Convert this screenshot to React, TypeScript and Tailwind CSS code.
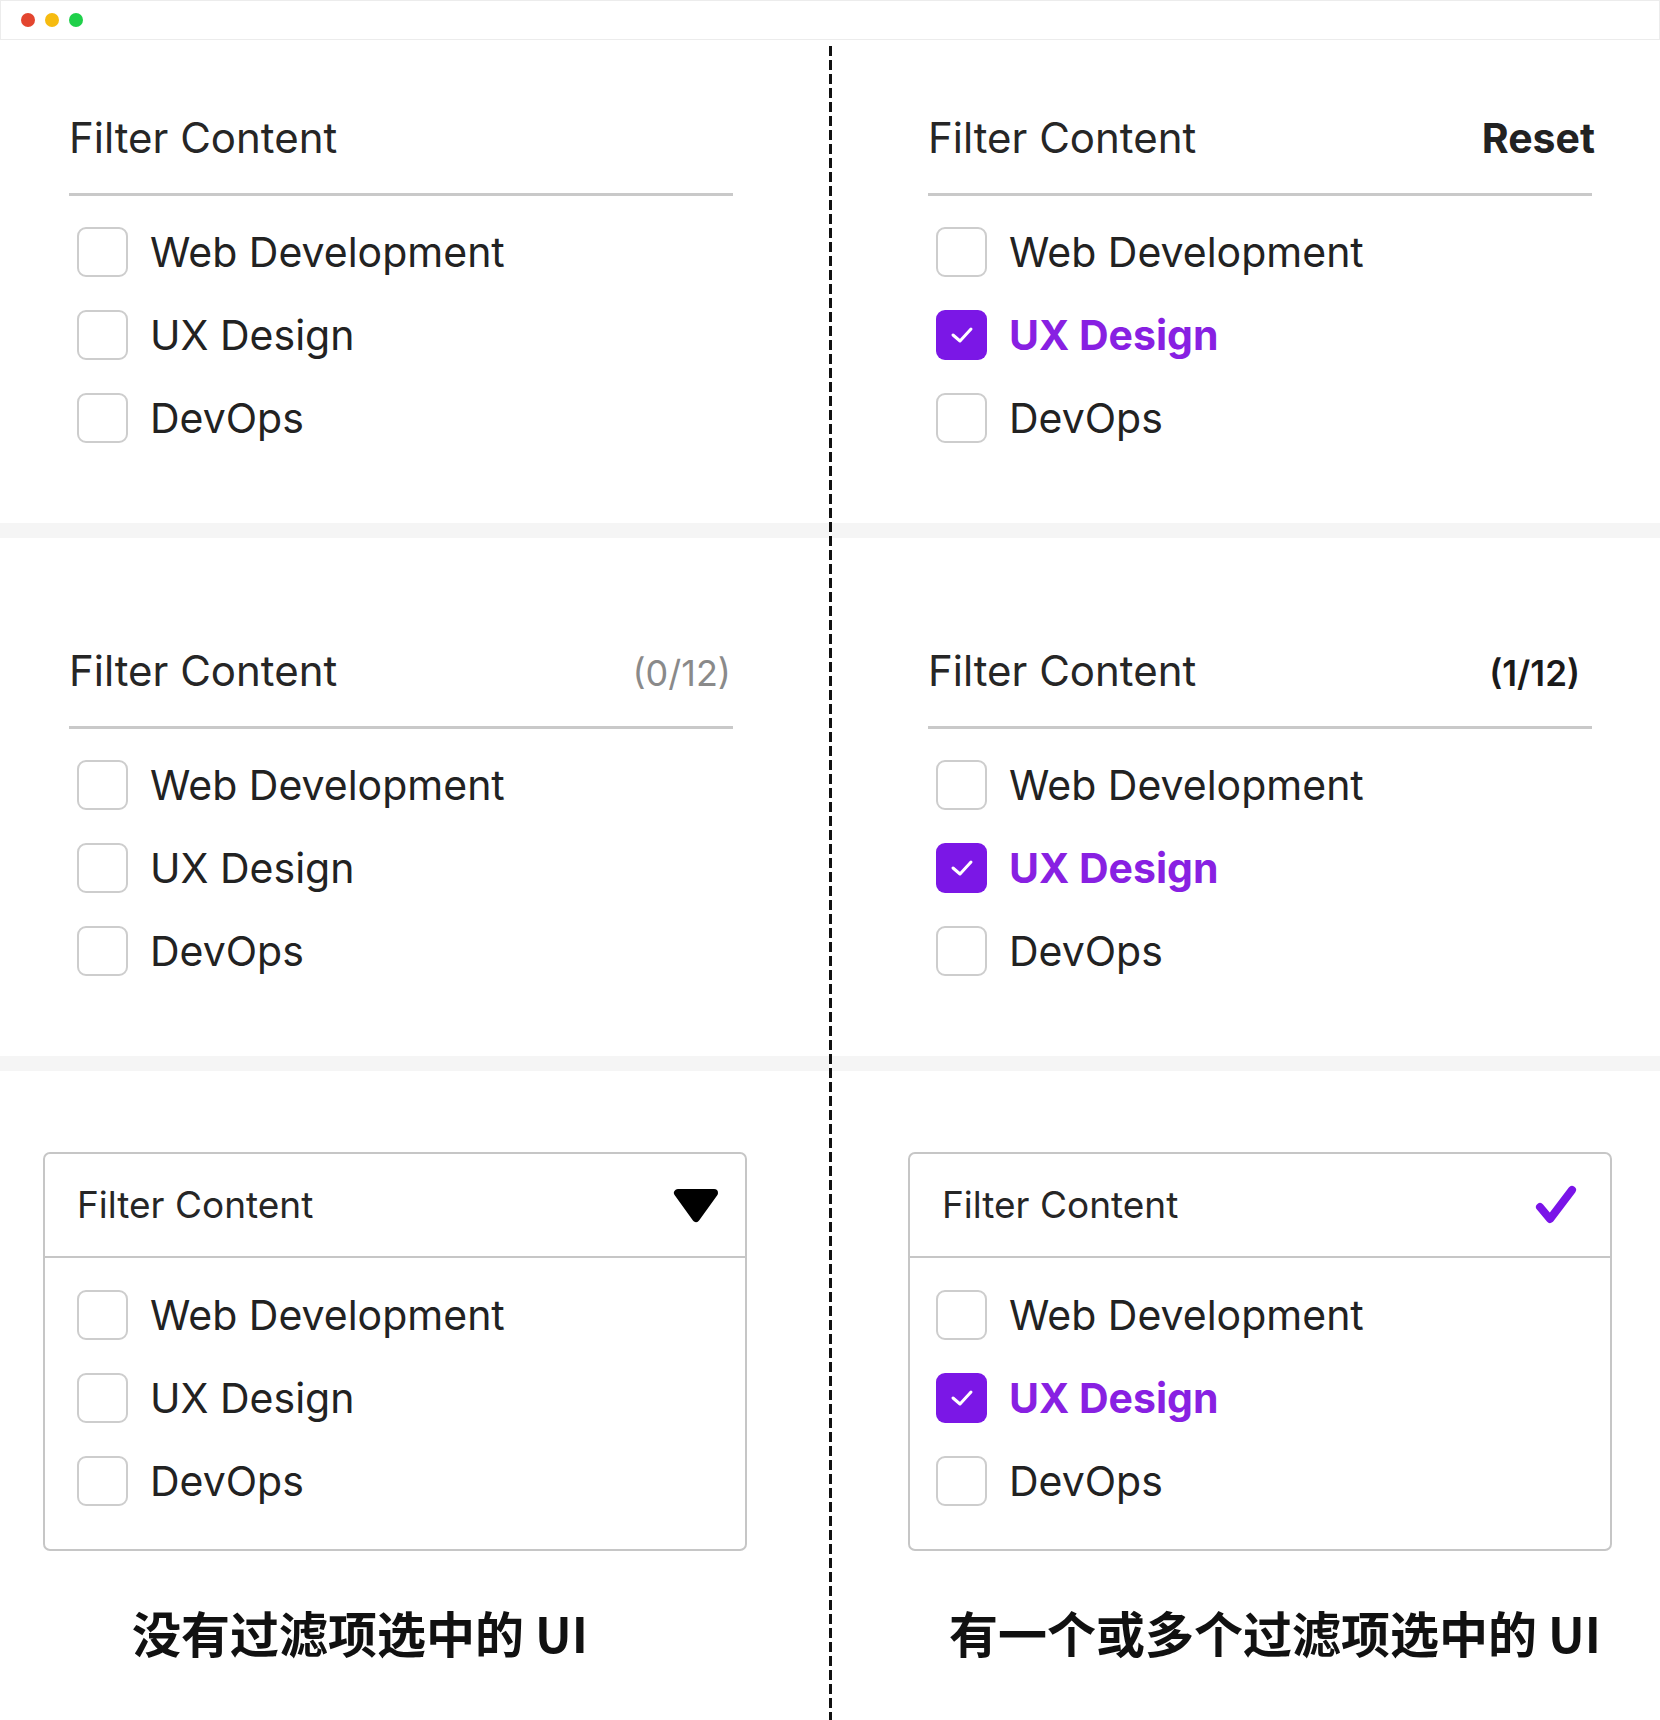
import React from 'react';

const options = ['Web Development', 'UX Design', 'DevOps'];

function Checkbox({ checked }: { checked: boolean }) {
  if (checked) {
    return (
      <div className="flex h-[50px] w-[51px] shrink-0 items-center justify-center rounded-[9px] bg-[#7b17e6]">
        <svg width="26" height="18" viewBox="0 0 26 18" fill="none">
          <path d="M4 9 L11 15 L22 3" stroke="white" strokeWidth="3" strokeLinecap="round" strokeLinejoin="round" />
        </svg>
      </div>
    );
  }
  return <div className="h-[50px] w-[51px] shrink-0 rounded-[9px] border-2 border-[#cdcdcd] bg-white" />;
}

function OptionList({ selected, className }: { selected?: string; className?: string }) {
  return (
    <div className={'flex flex-col gap-[33px] ' + (className ?? '')}>
      {options.map((opt) => {
        const on = opt === selected;
        return (
          <div key={opt} className="flex h-[50px] items-center gap-[22px]">
            <Checkbox checked={on} />
            <span
              className={
                on
                  ? 'text-[41px] leading-[48px] font-bold text-[#8820e2]'
                  : 'text-[41px] leading-[48px] text-[#222222]'
              }
            >
              {opt}
            </span>
          </div>
        );
      })}
    </div>
  );
}

function PlainSection({
  right,
  selected,
  padClass,
  topClass,
}: {
  right?: React.ReactNode;
  selected?: string;
  padClass: string;
  topClass: string;
}) {
  return (
    <div className={`${padClass} ${topClass} pb-[80px]`}>
      <div className="flex h-[48px] w-[664px] items-center justify-between">
        <span className="text-[42px] leading-[48px] text-[#262626]">Filter Content</span>
        {right}
      </div>
      <div className="mt-[31px] h-[3px] w-[664px] bg-[#c9c9c9]" />
      <OptionList selected={selected} className="mt-[31px] pl-[8px]" />
    </div>
  );
}

function BoxSection({
  icon,
  selected,
  boxClass,
  rowsClass,
  headClass,
  captionClass,
  caption,
}: {
  icon: React.ReactNode;
  selected?: string;
  boxClass: string;
  rowsClass: string;
  headClass: string;
  captionClass: string;
  caption: string;
}) {
  return (
    <div className="pt-[81px]">
      <div className={`${boxClass} w-[704px] rounded-[7px] border-2 border-[#c6c6c6]`}>
        <div className={`flex h-[104px] items-center justify-between border-b-2 border-[#c6c6c6] pl-[32px] ${headClass}`}>
          <span className="text-[37px] leading-[44px] text-[#262626]">Filter Content</span>
          {icon}
        </div>
        <OptionList selected={selected} className={`pt-[32px] pb-[43px] ${rowsClass}`} />
      </div>
      <div
        className={`mt-[53px] text-[49px] leading-[56px] font-bold text-[#111111] ${captionClass}`}
        style={{ fontFamily: '"Noto Sans CJK SC", "Noto Sans", sans-serif' }}
      >
        {caption}
      </div>
    </div>
  );
}

const Band = () => <div className="h-[15px] w-full bg-[#f5f5f5]" />;

export default function App() {
  return (
    <div
      className="h-[1720px] w-[1660px] overflow-hidden bg-white"
      style={{ fontFamily: 'Inter, "Noto Sans", sans-serif' }}
    >
      {/* window bar */}
      <div className="flex h-[40px] items-center gap-[10px] border border-[#ececec] bg-white pl-[20px]">
        <div className="h-[14px] w-[14px] rounded-full bg-[#e3452f]" />
        <div className="h-[14px] w-[14px] rounded-full bg-[#f6bb10]" />
        <div className="h-[14px] w-[14px] rounded-full bg-[#1fd04a]" />
      </div>

      <div className="flex h-[1680px]">
        {/* without selection */}
        <div className="w-[829px]">
          <PlainSection padClass="pl-[69px]" topClass="pt-[74px]" />
          <Band />
          <PlainSection
            padClass="pl-[69px]"
            topClass="pt-[109px]"
            right={<span className="mr-[2px] mt-[3px] text-[36px] leading-[44px] text-[#8a8a8a]">(0/12)</span>}
          />
          <Band />
          <BoxSection
            boxClass="ml-[43px]"
            rowsClass="pl-[32px]"
            headClass="pr-[26px]"
            captionClass="pl-[132px]"
            caption="没有过滤项选中的 UI"
            icon={
              <svg width="46" height="36" viewBox="0 0 46 36">
                <path d="M5 6 H41 L23 31 Z" fill="#000" stroke="#000" strokeWidth="8" strokeLinejoin="round" />
              </svg>
            }
          />
        </div>

        {/* dashed divider */}
        <div className="mt-[6px] w-[3px] bg-[repeating-linear-gradient(to_bottom,#111_0px,#111_10px,transparent_10px,transparent_14px)]" />

        {/* with selection */}
        <div className="flex-1">
          <PlainSection
            padClass="pl-[96px]"
            topClass="pt-[74px]"
            selected="UX Design"
            right={<span className="mr-[-3px] text-[41px] leading-[48px] font-bold text-[#222222]">Reset</span>}
          />
          <Band />
          <PlainSection
            padClass="pl-[96px]"
            topClass="pt-[109px]"
            selected="UX Design"
            right={<span className="mr-[12px] mt-[3px] text-[35px] leading-[44px] font-semibold text-[#1a1a1a]">(1/12)</span>}
          />
          <Band />
          <BoxSection
            boxClass="ml-[76px]"
            rowsClass="pl-[26px]"
            headClass="pr-[32px]"
            captionClass="pl-[117px]"
            caption="有一个或多个过滤项选中的 UI"
            selected="UX Design"
            icon={
              <svg width="44" height="42" viewBox="0 0 44 42" fill="none">
                <path d="M6 23 L16 35 L38 6" stroke="#7a14e8" strokeWidth="8" strokeLinecap="round" strokeLinejoin="round" />
              </svg>
            }
          />
        </div>
      </div>
    </div>
  );
}
